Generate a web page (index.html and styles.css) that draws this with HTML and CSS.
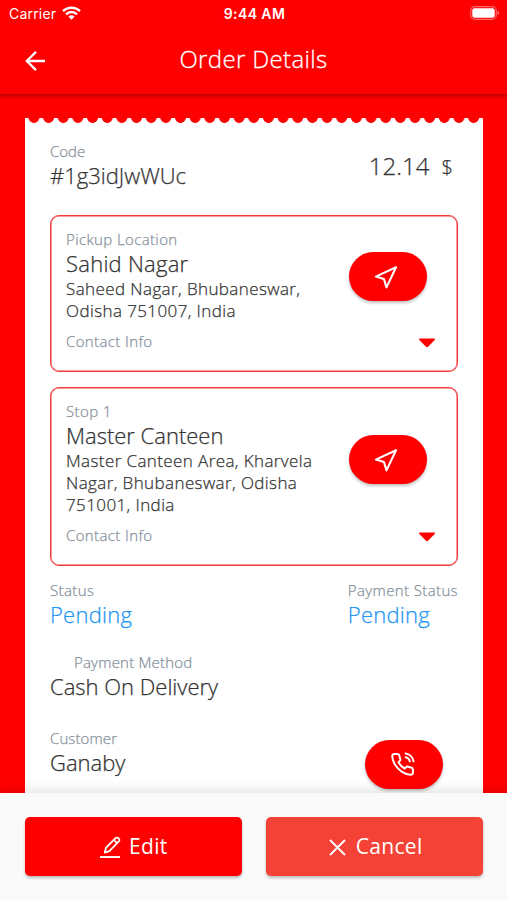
FILE: index.html
```
<!DOCTYPE html>
<html lang="en">
  <head>
    <meta charset="UTF-8" />
    <meta name="viewport" content="width=device-width, initial-scale=1.0" />
    <title>Order Details</title>
    <link rel="stylesheet" href="styles.css">
  </head>
  <body>
    <header class="appbar">
      <div class="statusbar">
        <div class="carrier">
          <span>Carrier</span>
          <svg width="19" height="14" viewBox="0 0 19 14" fill="none" stroke="#fff" stroke-width="2.5">
            <path d="M1 5.2a12 12 0 0 1 17 0" />
            <path d="M4 8.3a7.8 7.8 0 0 1 11 0" />
            <path d="M6.4 10.6a4.4 4.4 0 0 1 6.2 0L9.5 13.8z" fill="#fff" stroke="none" />
          </svg>
        </div>
        <div class="time">9:44 AM</div>
        <div class="battery">
          <svg width="30" height="14" viewBox="0 0 30 14">
            <rect x="0.7" y="0.7" width="25.6" height="12.6" rx="4" fill="none" stroke="#fff" stroke-opacity="0.4" stroke-width="1.2" />
            <rect x="2.3" y="2.3" width="22.4" height="9.4" rx="2.3" fill="#fff" />
            <path d="M27.6 5v4q1.6-.6 1.6-2t-1.6-2z" fill="#fff" fill-opacity="0.5" />
          </svg>
        </div>
      </div>
      <div class="toolbar">
        <svg class="back" width="20" height="20" viewBox="0 0 20 20" fill="none" stroke="#fff" stroke-width="2.3">
          <path d="M20 10H2M11 .9L1.8 10l9.2 9.1" />
        </svg>
        <h1>Order Details</h1>
      </div>
    </header>

    <main class="receipt">
      <div class="order-head">
        <div>
          <div class="label code">Code</div>
          <div class="value">#1g3idJwWUc</div>
        </div>
        <div class="price">12.14 <span>$</span></div>
      </div>

      <section class="stop">
        <div class="stop-main">
          <div class="stop-text">
            <div class="label">Pickup Location</div>
            <div class="value place">Sahid Nagar</div>
            <div class="address">Saheed Nagar, Bhubaneswar,<br>Odisha 751007, India</div>
          </div>
          <button class="pill">
            <svg width="24" height="24" viewBox="0 0 24 24" fill="none" stroke="#fff" stroke-width="2.1" stroke-linejoin="round">
              <path d="M22 2.2L1.8 11.6l8.2 2.5 2.5 8.3z" />
            </svg>
          </button>
        </div>
        <div class="contact">
          <span class="label">Contact Info</span>
          <svg width="18" height="10" viewBox="0 0 18 10"><path d="M1.6.5h14.8q1.2.4.3 1.4L10 8.8q-1 .9-2 0L1.3 1.9Q.4.9 1.6.5z" fill="#f00" /></svg>
        </div>
      </section>

      <section class="stop">
        <div class="stop-main">
          <div class="stop-text">
            <div class="label">Stop 1</div>
            <div class="value">Master Canteen</div>
            <div class="address">Master Canteen Area, Kharvela<br>Nagar, Bhubaneswar, Odisha<br>751001, India</div>
          </div>
          <button class="pill">
            <svg width="24" height="24" viewBox="0 0 24 24" fill="none" stroke="#fff" stroke-width="2.1" stroke-linejoin="round">
              <path d="M22 2.2L1.8 11.6l8.2 2.5 2.5 8.3z" />
            </svg>
          </button>
        </div>
        <div class="contact">
          <span class="label">Contact Info</span>
          <svg width="18" height="10" viewBox="0 0 18 10"><path d="M1.6.5h14.8q1.2.4.3 1.4L10 8.8q-1 .9-2 0L1.3 1.9Q.4.9 1.6.5z" fill="#f00" /></svg>
        </div>
      </section>

      <div class="row status-row">
        <div>
          <div class="label">Status</div>
          <div class="value pending">Pending</div>
        </div>
        <div>
          <div class="label">Payment Status</div>
          <div class="value pending">Pending</div>
        </div>
      </div>

      <div class="payment">
        <div class="label">Payment Method</div>
        <div class="value">Cash On Delivery</div>
      </div>

      <div class="row customer">
        <div>
          <div class="label">Customer</div>
          <div class="value">Ganaby</div>
        </div>
        <button class="pill call">
          <svg width="25" height="25" viewBox="0 0 24 24" fill="none" stroke="#fff" stroke-width="1.9" stroke-linecap="round" stroke-linejoin="round">
            <path d="M15 5a5 5 0 0 1 4 4M15 1.4a9 9 0 0 1 7.6 7.6M22 16.9v3a2 2 0 0 1-2.2 2 19.8 19.8 0 0 1-8.6-3.1 19.5 19.5 0 0 1-6-6A19.8 19.8 0 0 1 2.1 4.2A2 2 0 0 1 4.1 2h3a2 2 0 0 1 2 1.7c.13 1 .36 1.9.7 2.8a2 2 0 0 1-.45 2.1L8.1 9.9a16 16 0 0 0 6 6l1.3-1.3a2 2 0 0 1 2.1-.45c.9.34 1.85.57 2.8.7a2 2 0 0 1 1.7 2z" />
          </svg>
        </button>
      </div>
    </main>

    <footer class="actions">
      <button class="action edit">
        <svg width="22" height="24" viewBox="0 0 23 24" fill="none" stroke="#fff" stroke-width="1.9" stroke-linejoin="round">
          <path d="M1 22.5h21" stroke-width="2" />
          <path d="M6 17.8l1.3-5L17.3 2.8a2.1 2.1 0 0 1 3 0l.4.4a2.1 2.1 0 0 1 0 3L10.8 16.3zM15.5 4.6l3.4 3.4" />
        </svg>
        <span>Edit</span>
      </button>
      <button class="action cancel">
        <svg width="17" height="17" viewBox="0 0 17 17" fill="none" stroke="#fff" stroke-width="1.8">
          <path d="M1 1l15 15M16 1L1 16" />
        </svg>
        <span>Cancel</span>
      </button>
    </footer>
  </body>
</html>
```
FILE: styles.css
```
* {
  box-sizing: border-box;
}
body {
  margin: 0;
  height: 900px;
  display: flex;
  flex-direction: column;
  overflow: hidden;
  background: #ff0000;
  color: #333;
  font-family: "Open Sans", sans-serif;
  font-weight: 300;
}
button {
  border: none;
  padding: 0;
  color: white;
  font-family: inherit;
  cursor: pointer;
}

/* Top bar */
.appbar {
  flex: none;
  height: 94px;
  color: white;
  box-shadow: 0 1px 5px rgba(0, 0, 0, 0.45);
}
.statusbar {
  display: grid;
  grid-template-columns: 1fr auto 1fr;
  align-items: center;
  height: 27px;
  padding: 0 7px 0 9px;
  font-family: Inter, sans-serif;
  font-size: 14px;
  font-weight: 400;
}
.carrier {
  display: flex;
  align-items: center;
  gap: 6px;
  letter-spacing: 0.2px;
}
.carrier svg {
  margin-top: -2px;
}
.time {
  font-weight: 600;
  font-size: 14px;
  letter-spacing: 0.4px;
}
.battery {
  display: flex;
  justify-content: flex-end;
}
.battery svg {
  margin-top: -1px;
}
.toolbar {
  display: flex;
  align-items: center;
  height: 67px;
  padding: 0 25px;
}
.toolbar h1 {
  flex: 1;
  margin: -4px 18px 0 -2px;
  text-align: center;
  font-size: 24px;
  font-weight: 300;
  letter-spacing: 0.35px;
  -webkit-text-stroke: 0.3px;
}

/* Receipt */
.receipt {
  flex: 1;
  min-height: 0;
  overflow: hidden;
  margin: 24px 24.5px 0 25px;
  padding: 23px 24.5px 0 25px;
  background:
    radial-gradient(circle at 50% -0.5px, #ff0000 5px, transparent 5.7px) 1.6px 0 / 14.67px 7px repeat-x,
    #fff;
  -webkit-text-stroke: 0.25px;
}
.label {
  color: #85909a;
  font-size: 15px;
  line-height: 20px;
  letter-spacing: 0.38px;
}
.label.code {
  letter-spacing: 0;
}
.value {
  font-size: 22px;
  line-height: 29px;
}
.place {
  letter-spacing: 0.25px;
}
.order-head {
  display: flex;
  justify-content: space-between;
  height: 74px;
}
.price {
  padding: 7px 5px 0 0;
  font-size: 24px;
  line-height: 36px;
}
.price span {
  margin-left: 6px;
  font-size: 20px;
}
.stop {
  margin-bottom: 15px;
  padding: 13px 15px 20px;
  border: 1px solid #f43b3b;
  border-radius: 9px;
  box-shadow: inset 0 0 0 0.5px #f43b3b;
}
.stop-main {
  display: flex;
  align-items: center;
  justify-content: space-between;
  padding-right: 15px;
}
.address {
  font-size: 17px;
  line-height: 22px;
  letter-spacing: 0.4px;
  white-space: nowrap;
}
.pill {
  display: flex;
  flex: none;
  align-items: center;
  justify-content: center;
  width: 78px;
  height: 49px;
  margin-top: 2px;
  border-radius: 25px;
  background: #ff0000;
  box-shadow: 0 2px 3px rgba(0, 0, 0, 0.25);
}
.pill svg {
  margin-left: -4px;
}
.contact {
  display: flex;
  align-items: center;
  justify-content: space-between;
  margin-top: 9px;
  padding-right: 6px;
}
.contact svg {
  margin-top: 3px;
}
.row {
  display: flex;
  justify-content: space-between;
}
.status-row {
  margin-top: -1px;
}
.pending {
  color: #2196f3;
  letter-spacing: 0.25px;
}
.payment {
  margin-top: 23px;
}
.payment .label {
  padding-left: 24px;
  letter-spacing: 0.2px;
}
.customer {
  margin-top: 27px;
}
.customer .label {
  letter-spacing: 0.1px;
}
.call {
  margin: 12px 15px 0 0;
}

/* Bottom actions */
.actions {
  display: flex;
  flex: none;
  gap: 24px;
  height: 107px;
  padding: 24px 24.5px 24px 25px;
  background: #fafafa;
  box-shadow: 0 -2px 12px rgba(0, 0, 0, 0.13);
  z-index: 1;
}
.action {
  display: flex;
  flex: 1;
  align-items: center;
  justify-content: center;
  gap: 8px;
  border-radius: 5px;
  background: #ff0000;
  box-shadow: 0 2px 3px rgba(0, 0, 0, 0.25);
  font-size: 21px;
  font-weight: 400;
  letter-spacing: 0.3px;
}
.action span {
  margin-top: -2px;
}
.cancel {
  gap: 10px;
  background: #f44336;
}
.cancel svg {
  margin: 2px 0 0 3px;
}
```
